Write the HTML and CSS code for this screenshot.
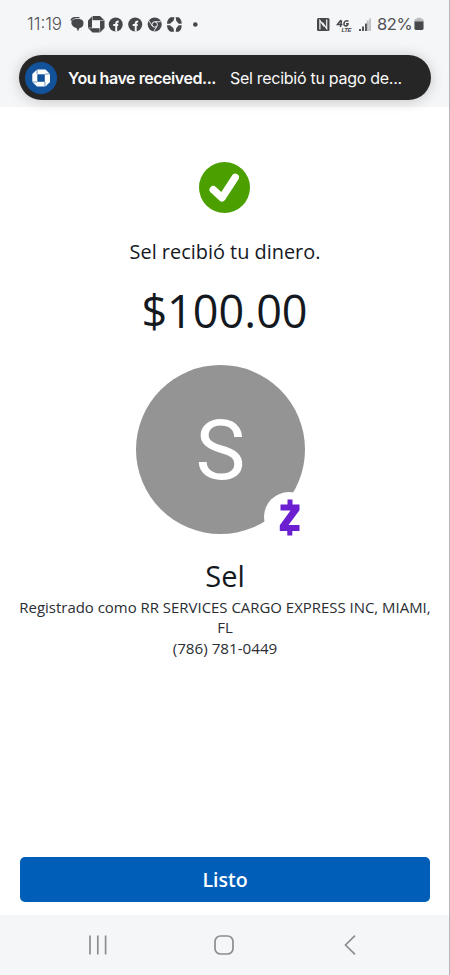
FILE: index.html
```
<!DOCTYPE html>
<html lang="es">
<head>
<meta charset="utf-8">
<title>Pago recibido</title>
<link rel="stylesheet" href="styles.css">
</head>
<body>
<div class="phone">
  <header class="top">
    <div class="status">
      <span class="clock">11:19</span>
      <svg class="notifs" width="132" height="20" viewBox="0 0 132 20">
        <g fill="#46474b">
          <path d="M.5 6Q1.500 3 5 3h4.500v1.200H6Q3 4.200 1.200 7z"/>
          <path d="M5.500 5h4q4 .3 4 4.300t-4 4.700L8 17.300 6.500 14Q3 13.500 1.500 10 .5 5.300 5.500 5z"/>
          <path d="M22.500 2h7.500l4.500 4.500v7.500L30 18.500h-7.500L18 14V6.500z"/>
          <circle cx="45.700" cy="10.500" r="7"/>
          <circle cx="65.200" cy="10.500" r="7"/>
          <circle cx="84.700" cy="10.500" r="7"/>
          <path d="M100.500 3.200h4l-1 3.500-3.500 3H97q0-4.500 3.500-6.500zM105.700 3.200h3q3 2 3 6.500h-3l-2.500-3zM97 11.200h3l3.500 3 .5 3.500h-3.500q-3.500-2-3.500-6.500zM111.700 11.200q0 4.500-3 6.500h-3l.5-3.500 2.500-3z"/>
          <circle cx="125.300" cy="10.500" r="2.300"/>
        </g>
        <path d="M22 6.200h8v8h-8z" fill="#f5f6f8"/>
        <path d="M22.500 6.500V2M29.500 6.500H34.500M29.700 14v4.500M22.500 13.900H18" stroke="#f5f6f8" stroke-width=".5" fill="none"/>
        <path d="M46.200 17.500v-8q0-2 2.500-2M43.200 11h5" stroke="#f5f6f8" stroke-width="2" fill="none"/>
        <path d="M65.700 17.500v-8q0-2 2.500-2M62.700 11h5" stroke="#f5f6f8" stroke-width="2" fill="none"/>
        <circle cx="84.700" cy="10.500" r="2.700" fill="none" stroke="#f5f6f8"/>
        <path d="M84.700 7.700h6M82.300 12l-3.500-5.500M87.100 12l-3.400 5.500" stroke="#f5f6f8" stroke-width=".9" fill="none"/>
      </svg>
      <svg class="signals" width="56" height="20" viewBox="0 0 56 20">
        <rect x="1" y="4" width="12.500" height="13" rx="1.500" fill="#46474b"/>
        <path d="M3.900 15.500V6.500l4.200 6M10.700 5.500v9L6.500 8.500" stroke="#f5f6f8" stroke-width="1.200" fill="none"/>
        <path d="M25 6l-3.500 4.500h5M25.500 6.500l-1 6.500M32.500 7.300q-3-1.500-4.300 1.200-.9 3.300 1.500 3.500 1.900 0 2.300-2.200h-2" fill="none" stroke="#46474b" stroke-width="1.500"/>
        <text class="lte" x="25.500" y="18">LTE</text>
        <path d="M44 17v-2M47 17v-4.500M50 17V9.500" stroke="#55565a" stroke-width="2"/>
        <path d="M51.800 17V6.500M54 17V4.500" stroke="#bdbec1" stroke-width="1.800"/>
      </svg>
      <span class="percent">82%</span>
      <svg class="battery" width="10" height="14" viewBox="0 0 11 14">
        <path d="M3 0h5v1.500h1q1.500 0 1.500 1.500v2h-10V3Q.5 1.500 2 1.500h1z" fill="#b9babd"/>
        <path d="M.5 4.300h10v7.500q0 1.700-1.500 1.700H2Q.5 13.500 .5 11.800z" fill="#46474b"/>
      </svg>
    </div>
    <div class="toast">
      <svg width="32" height="32" viewBox="0 0 32 32">
        <circle cx="16" cy="16" r="16" fill="#12529b"/>
        <path d="M12 7.500h8.500l4.500 4.500v8L20.500 24.500H12L7.300 20V12z" fill="#fff"/>
        <path d="M12.300 12.300h7.500v7.500h-7.500z" fill="#12529b"/>
        <path d="M12 12V7M20 12h5M20 20v5M12 20H7" stroke="#12529b" stroke-width=".6"/>
      </svg>
      <span class="toast-title">You have received...</span>
      <span class="toast-text">Sel recibió tu pago de...</span>
    </div>
  </header>
  <main>
    <svg class="check" width="51" height="51" viewBox="0 0 51 51">
      <circle cx="25.500" cy="25.500" r="25.500" fill="#4ba000"/>
      <path d="M14.300 27.800l8.700 8L36.200 15.500" fill="none" stroke="#fff" stroke-width="7.500" stroke-linecap="round" stroke-linejoin="round"/>
    </svg>
    <p class="message">Sel recibió tu dinero.</p>
    <p class="amount">$100.00</p>
    <div class="avatar">
      <span class="initial">S</span>
      <svg class="badge" width="50" height="50" viewBox="0 0 50 50">
        <circle cx="25" cy="25" r="25" fill="#fff"/>
        <path d="M23.500 7.500h5v5h7v5.800L24.500 33h11v6h-7.200v4.500h-5V39h-7.500v-5.800L26.500 18.500H16.500v-6h7z" fill="#6b1fd1"/>
      </svg>
    </div>
    <h1 class="name">Sel</h1>
    <p class="registered">Registrado como RR SERVICES CARGO EXPRESS INC, MIAMI, FL</p>
    <p class="tel">(786) 781-0449</p>
    <button class="done">Listo</button>
  </main>
  <nav>
    <svg width="20" height="20" viewBox="0 0 20 20"><path d="M2 .5v19M9.800 .5v19M17.600 .5v19" stroke="#8c8d90" stroke-width="1.700"/></svg>
    <svg width="20" height="20" viewBox="0 0 20 20"><rect x="1" y="1" width="18" height="18" rx="5.500" fill="none" stroke="#8c8d90" stroke-width="1.700"/></svg>
    <svg width="20" height="20" viewBox="0 0 20 20"><path d="M15 .6L5.500 10l9.500 9.400" fill="none" stroke="#8c8d90" stroke-width="1.700"/></svg>
  </nav>
</div>
</body>
</html>
```
FILE: styles.css
```
* { box-sizing: border-box; margin: 0; }
body { background: #fff; font-family: "Open Sans", "Noto Sans", sans-serif; color: #14191f; }
.phone { width: 450px; height: 975px; display: flex; flex-direction: column; border-right: 1px solid #b4b5b7; overflow: hidden; }
svg { display: block; flex: none; }
.top { height: 107px; flex: none; background: #f5f6f8; }
.status { display: flex; align-items: center; height: 48px; padding-left: 27px; font: 17px/20px Inter, sans-serif; color: #505155; }
.clock { width: 36px; font-size: 17px; letter-spacing: 0; white-space: nowrap; font-weight: 300; }
.notifs { margin-left: 7px; }
.signals { margin-left: 114px; }
.lte { font: italic bold 6px "Liberation Sans", sans-serif; fill: #46474b; letter-spacing: -.5px; }
.percent { width: 36px; margin-left: 5px; font-size: 16.500px; letter-spacing: -.4px; }
.battery { margin-left: 1px; }
.toast { display: flex; align-items: center; width: 412px; height: 45px; margin: 7px 0 0 19px; padding-left: 6px; border-radius: 23px; background: #262626; color: #fafafa; box-shadow: 0 1px 14px rgba(0,0,0,.2); font: 16px/20px Inter, sans-serif; white-space: nowrap; }
.toast-title { width: 148px; margin-left: 11px; font-weight: 600; letter-spacing: -.45px; }
.toast-text { margin-left: 14px; letter-spacing: -.28px; }
main { flex: 1; display: flex; flex-direction: column; align-items: center; padding: 55px 19px 0 20px; }
.check { margin-right: 1px; }
.message { margin-top: 25px; font-size: 19.900px; line-height: 28px; }
.amount { margin: 15px 1px 0 0; font-size: 45px; line-height: 60px; }
.avatar { position: relative; display: flex; justify-content: center; align-items: center; width: 169px; height: 169px; margin: 24px 9px 0 0; border-radius: 50%; background: #949494; }
.initial { font: 84px/84px Roboto, sans-serif; color: #fff; padding-top: 2px; }
.badge { position: absolute; left: 128px; top: 127px; }
.name { margin-top: 23px; font-size: 29px; line-height: 38px; font-weight: 400; }
.registered { align-self: stretch; margin: 2px -4px 0; text-align: center; font-size: 14.950px; line-height: 20px; color: #2b2e33; }
.tel { margin-top: 1px; font-size: 15.200px; line-height: 20px; color: #2b2e33; }
.done { align-self: stretch; height: 45px; margin: auto 0 13.500px; border: 0; border-radius: 5px; background: #005eb8; color: #fff; font: 600 19.500px/45px "Open Sans", sans-serif; padding: 0; }
nav { height: 60px; flex: none; background: #f5f6f8; display: flex; justify-content: space-between; align-items: center; padding: 0 89px 0 88px; }
```
